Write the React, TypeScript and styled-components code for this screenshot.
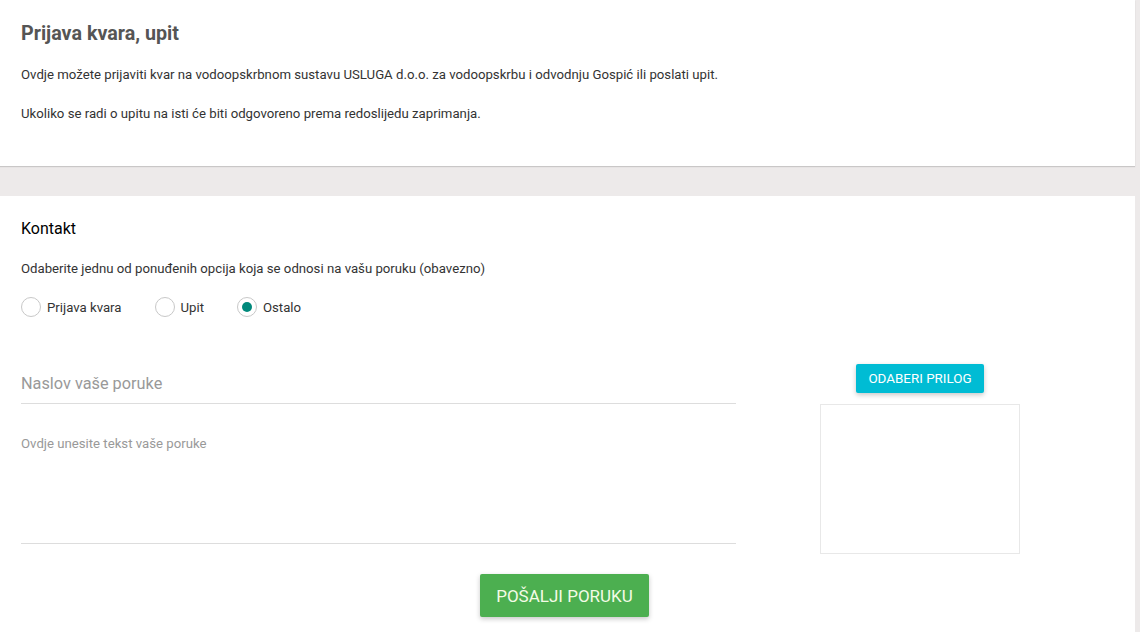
import { FC } from 'react';
import styled, { createGlobalStyle } from 'styled-components';

const GlobalStyle = createGlobalStyle`
	html, body {
		margin: 0;
		padding: 0;
		background-color: #edeaea;
		font-family: Roboto, 'Liberation Sans', Arial, sans-serif;
	}
`;

const Page = styled.div`
	width: 1135px;
	display: flex;
	flex-direction: column;
`;

const Card = styled.section<{ $top?: boolean }>`
	background-color: #fff;
	padding: ${({ $top }) => ($top ? '20px 21px 42px' : '21px 21px 40px')};
	box-shadow: ${({ $top }) => ($top ? '0 1px 1px rgba(0, 0, 0, 0.15)' : 'none')};
	margin-bottom: ${({ $top }) => ($top ? '30px' : '0')};
`;

const Title = styled.h2`
	margin: 0;
	font-size: 19.7px;
	line-height: 28px;
	font-weight: 700;
	color: #555;
`;

const Text = styled.p<{ $gap?: number }>`
	margin: ${({ $gap }) => $gap ?? 19}px 0 0;
	font-size: 13.2px;
	line-height: 20px;
	color: #333;
`;

const Subtitle = styled.h3`
	margin: 0;
	font-size: 16px;
	line-height: 22px;
	font-weight: 400;
	color: #000;
	padding-top: 1px;
`;

const Options = styled.div`
	display: flex;
	align-items: center;
	margin-top: 18px;
	height: 20px;
`;

const Option = styled.label`
	display: flex;
	align-items: center;
	gap: 6px;
	margin-right: 33px;
	font-size: 13.2px;
	color: #333;
	cursor: pointer;
`;

const Radio = styled.span<{ $checked?: boolean }>`
	width: 18px;
	height: 18px;
	border-radius: 50%;
	border: 1px solid #c8c8c8;
	background-color: #fff;
	display: flex;
	align-items: center;
	justify-content: center;

	&::after {
		content: '';
		width: 10px;
		height: 10px;
		border-radius: 50%;
		background-color: ${({ $checked }) => ($checked ? '#00897b' : 'transparent')};
	}
`;

const FormRow = styled.div`
	display: flex;
	align-items: flex-start;
	margin-top: 47px;
`;

const Fields = styled.div`
	width: 715px;
	display: flex;
	flex-direction: column;
`;

const Input = styled.input`
	height: 39px;
	padding: 0;
	border: none;
	border-bottom: 1px solid #ddd;
	font-family: inherit;
	font-size: 16.3px;
	color: #333;
	outline: none;
	&::placeholder {
		color: #999;
	}
`;

const Message = styled.textarea`
	height: 108px;
	padding: 31px 0 0;
	border: none;
	border-bottom: 1px solid #ddd;
	resize: none;
	font-family: inherit;
	font-size: 13.2px;
	line-height: 18px;
	outline: none;
	&::placeholder {
		color: #999;
	}
`;

const Attachment = styled.div`
	margin-left: 84px;
	width: 200px;
	display: flex;
	flex-direction: column;
	align-items: center;
	gap: 11px;
`;

const Button = styled.button<{ $color: string; $big?: boolean }>`
	border: none;
	border-radius: 2px;
	background-color: ${({ $color }) => $color};
	color: ${({ $big }) => ($big ? '#f4fbe6' : '#fff')};
	font-family: inherit;
	font-size: ${({ $big }) => ($big ? '17px' : '13.4px')};
	text-transform: uppercase;
	height: ${({ $big }) => ($big ? '43px' : '29px')};
	padding: ${({ $big }) => ($big ? '0 16px' : '0 12px')};
	box-shadow: 0 2px 5px rgba(0, 0, 0, 0.22);
	cursor: pointer;
`;

const Preview = styled.div`
	width: 198px;
	height: 148px;
	border: 1px solid #e8e8e8;
`;

const Submit = styled.div`
	display: flex;
	justify-content: center;
	margin-top: 20px;
	padding-right: 6px;
`;

const App: FC = () => (
	<>
		<GlobalStyle />
		<Page>
			<Card $top>
				<Title>Prijava kvara, upit</Title>
				<Text $gap={17}>
					Ovdje možete prijaviti kvar na vodoopskrbnom sustavu USLUGA d.o.o. za
					vodoopskrbu i odvodnju Gospić ili poslati upit.
				</Text>
				<Text>Ukoliko se radi o upitu na isti će biti odgovoreno prema redoslijedu zaprimanja.</Text>
			</Card>
			<Card>
				<Subtitle>Kontakt</Subtitle>
				<Text>Odaberite jednu od ponuđenih opcija koja se odnosi na vašu poruku (obavezno)</Text>
				<Options>
					<Option>
						<Radio />
						Prijava kvara
					</Option>
					<Option>
						<Radio />
						Upit
					</Option>
					<Option>
						<Radio $checked />
						Ostalo
					</Option>
				</Options>
				<FormRow>
					<Fields>
						<Input placeholder="Naslov vaše poruke" />
						<Message placeholder="Ovdje unesite tekst vaše poruke" />
					</Fields>
					<Attachment>
						<Button $color="#00bcd4">Odaberi prilog</Button>
						<Preview />
					</Attachment>
				</FormRow>
				<Submit>
					<Button $color="#4caf50" $big>
						Pošalji poruku
					</Button>
				</Submit>
			</Card>
		</Page>
	</>
);

export default App;
